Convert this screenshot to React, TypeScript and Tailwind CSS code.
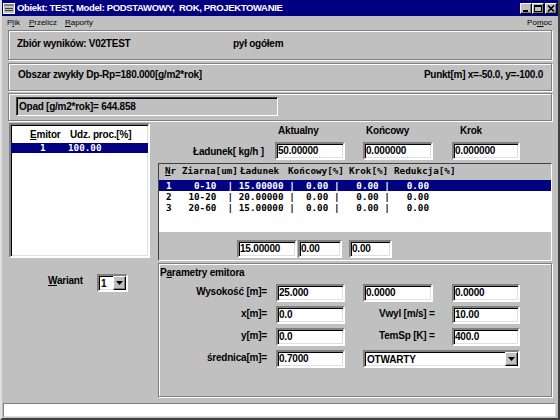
import React from "react";

const sunken =
  "border-2 border-t-[#808080] border-l-[#808080] border-b-white border-r-white shadow-[inset_1px_1px_0_#000,inset_-1px_-1px_0_#dfdfdf]";
const raised =
  "border border-t-white border-l-white border-b-black border-r-black shadow-[inset_-1px_-1px_0_#808080]";
const etched = "border border-[#808080] shadow-[inset_1px_1px_0_#fff,1px_1px_0_#fff]";
const sans = "font-['Liberation_Sans',Arial,sans-serif]";
const mono = "font-['DejaVu_Sans_Mono',monospace]";

function Field({ w, value, className = "" }: { w: string; value: string; className?: string }) {
  return (
    <div className={`${sunken} ${w} h-[18px] bg-white flex items-center pl-[1px] text-[10px] font-bold tracking-[-0.2px] leading-none ${className}`}>
      {value}
    </div>
  );
}

function DownBtn() {
  return (
    <div className={`${raised} w-[13px] h-[14px] bg-[#c0c0c0] flex items-center justify-center`}>
      <svg width="7" height="4" viewBox="0 0 7 4">
        <path d="M0 0H7L3.5 4Z" fill="#000" />
      </svg>
    </div>
  );
}

function TitleBtn({ kind }: { kind: "min" | "max" | "close" }) {
  return (
    <div className={`${raised} w-[12px] h-[11px] bg-[#c0c0c0] flex items-center justify-center`}>
      {kind === "min" && (
        <svg width="8" height="7" viewBox="0 0 8 7">
          <rect x="1" y="5" width="5" height="2" fill="#000" />
        </svg>
      )}
      {kind === "max" && (
        <svg width="8" height="7" viewBox="0 0 8 7">
          <rect x="0.5" y="0.5" width="7" height="6" fill="none" stroke="#000" />
          <rect x="0" y="0" width="8" height="2" fill="#000" />
        </svg>
      )}
      {kind === "close" && (
        <svg width="8" height="7" viewBox="0 0 8 7">
          <path d="M1 0.5L7 6.5M7 0.5L1 6.5" stroke="#000" strokeWidth="1.6" />
        </svg>
      )}
    </div>
  );
}

const rows = [
  "1    0-10  | 15.00000 |  0.00 |   0.00 |   0.00",
  "2   10-20  | 20.00000 |  0.00 |   0.00 |   0.00",
  "3   20-60  | 15.00000 |  0.00 |   0.00 |   0.00",
];

export default function App() {
  return (
    <div className={`w-[560px] h-[420px] bg-[#c0c0c0] flex flex-col overflow-hidden text-black ${sans} border-l-2 border-r-2 border-b-2 border-l-[#dfdfdf] border-r-[#404040] border-b-[#404040]`}>
      {/* Title bar */}
      <div className="h-[16px] bg-[#000080] flex items-center pl-[1px] pr-[1px] shrink-0">
        <svg width="12" height="11" viewBox="0 0 12 11" className="shrink-0">
          <rect x="0.5" y="0.5" width="11" height="10" fill="#c0c0c0" stroke="#fff" />
          <rect x="1" y="1" width="10" height="2" fill="#808080" />
          <rect x="2" y="5" width="8" height="1" fill="#404040" />
          <rect x="2" y="7" width="8" height="1" fill="#404040" />
        </svg>
        <span className="ml-[2px] text-white font-bold text-[9.5px] tracking-[-0.35px] whitespace-pre leading-none">
          Obiekt: TEST, Model: PODSTAWOWY,  ROK, PROJEKTOWANIE
        </span>
        <div className="ml-auto flex items-center">
          <TitleBtn kind="min" />
          <TitleBtn kind="max" />
          <div className="w-[1px]" />
          <TitleBtn kind="close" />
        </div>
      </div>

      {/* Menu */}
      <div className="h-[14px] flex items-center text-[8px] leading-none shrink-0 pl-[5px] pr-[6px]">
        <span>P<span className="underline">l</span>ik</span>
        <span className="ml-[9px]"><span className="underline">P</span>rzelicz</span>
        <span className="ml-[8px]"><span className="underline">R</span>aporty</span>
        <span className="ml-auto">Po<span className="underline">m</span>oc</span>
      </div>

      {/* Info panels */}
      <div className="px-[6px] flex flex-col text-[10px] font-bold tracking-[-0.25px] leading-[12px]">
        <div className={`${etched} h-[30px] flex items-start pt-[7px] pl-[8px]`}>
          <span className="w-[216px]">Zbiór wyników: V02TEST</span>
          <span>pył ogółem</span>
        </div>
        <div className={`${etched} h-[28px] mt-[3px] flex items-start pt-[5px] pl-[9px] pr-[8px]`}>
          <span>Obszar zwykły Dp-Rp=180.000[g/m2*rok]</span>
          <span className="ml-auto">Punkt[m] x=-50.0, y=-100.0</span>
        </div>
        <div className={`${etched} h-[28px] mt-[2px] pt-[3px] pl-[7px]`}>
          <div className="w-[262px] h-[19px] border border-t-[#404040] border-l-[#404040] border-b-white border-r-white shadow-[inset_1px_1px_0_#000] flex items-center pl-[2px]">
            Opad [g/m2*rok]= 644.858
          </div>
        </div>
      </div>

      {/* Main area */}
      <div className="mt-[2px] flex pl-[7px]">
        {/* Left column */}
        <div className="w-[141px] flex flex-col">
          <div className={`${sunken} h-[135px] bg-white flex flex-col`}>
            <div className="h-[18px] flex items-center text-[10px] font-bold tracking-[-0.2px] pt-[1px]">
              <span className="ml-[19px] w-[40px]"><span className="underline">E</span>mitor</span>
              <span>Udz. proc.[%]</span>
            </div>
            <div className={`h-[10px] bg-[#000080] text-white ${mono} font-bold text-[9.3px] leading-[10px] whitespace-pre pl-[29px]`}>
              {"1    100.00"}
            </div>
          </div>
          <div className="mt-[16px] flex items-center pl-[39px]">
            <span className="w-[49px] text-[10px] font-bold tracking-[-0.2px] -mt-[6px]"><span className="underline">W</span>ariant</span>
            <div className={`${sunken} w-[31px] h-[18px] bg-white flex items-center pl-[2px]`}>
              <span className="text-[10px] font-bold flex-1">1</span>
              <DownBtn />
            </div>
          </div>
        </div>

        {/* Right column */}
        <div className="ml-[8px] w-[394px] flex flex-col">
          <div className="h-[14px] flex items-center text-[10px] font-bold tracking-[-0.2px]">
            <span className="ml-[120px] w-[88px]">Aktualny</span>
            <span className="w-[94px]">Końcowy</span>
            <span>Krok</span>
          </div>
          <div className="mt-[5px] h-[18px] flex items-center text-[10px] font-bold tracking-[-0.2px]">
            <div className="w-[117px] pl-[35px]">Ładunek[ kg/h ]</div>
            <Field w="w-[70px]" value="50.00000" />
            <Field w="w-[70px]" value="0.000000" className="ml-[18px]" />
            <Field w="w-[68px]" value="0.000000" className="ml-[19px]" />
          </div>

          {/* Table group */}
          <div className="mt-[3px] h-[98px] border border-t-[#404040] border-l-[#404040] border-b-white border-r-white flex flex-col">
            <div className={`h-[16px] flex items-start pt-[1px] pl-[6px] ${mono} font-bold text-[9.3px] leading-[12px] whitespace-pre`}>
              <span className="w-[17px]"><span className="underline">N</span>r</span>
              <span className="w-[58px]">Ziarna[um]</span>
              <span className="w-[48px]">Ładunek</span>
              <span className="w-[61px]">Końcowy[%]</span>
              <span className="w-[45px]">Krok[%]</span>
              <span>Redukcja[%]</span>
            </div>
            <div className={`h-[52px] bg-white ${mono} font-bold text-[9.3px] leading-[11px] whitespace-pre`}>
              {rows.map((r, i) => (
                <div key={i} className={`h-[11px] pl-[7px] ${i === 0 ? "bg-[#000080] text-white" : ""}`}>
                  {r}
                </div>
              ))}
            </div>
            <div className="mt-[8px] flex pl-[78px]">
              <Field w="w-[60px]" value="15.00000" />
              <Field w="w-[44px]" value="0.00" className="ml-[1px]" />
              <Field w="w-[43px]" value="0.00" className="ml-[7px]" />
            </div>
          </div>

          {/* Parametry emitora */}
          <div className={`${etched} mt-[2px] h-[134px] flex flex-col text-[10px] font-bold tracking-[-0.2px]`}>
            <div className="pl-[1px] pt-[3px] leading-[12px]">
              P<span className="underline">a</span>rametry emitora
            </div>
            <div className="mt-[5px] flex flex-col gap-[4px]">
              <div className="flex items-center h-[18px]">
                <span className="w-[108px] text-right -mt-[4px]">Wysokość [m]=</span>
                <Field w="w-[69px]" value="25.000" className="ml-[9px]" />
                <Field w="w-[70px]" value="0.0000" className="ml-[18px]" />
                <Field w="w-[68px]" value="0.0000" className="ml-[19px]" />
              </div>
              <div className="flex items-center h-[18px]">
                <span className="w-[108px] text-right -mt-[4px]">x[m]=</span>
                <Field w="w-[69px]" value="0.0" className="ml-[9px]" />
                <span className="ml-[18px] w-[70px] pl-[16px] -mt-[4px] whitespace-pre">Vwyl [m/s] =</span>
                <Field w="w-[68px]" value="10.00" className="ml-[19px]" />
              </div>
              <div className="flex items-center h-[18px]">
                <span className="w-[108px] text-right -mt-[4px]">y[m]=</span>
                <Field w="w-[69px]" value="0.0" className="ml-[9px]" />
                <span className="ml-[18px] w-[70px] pl-[16px] -mt-[4px] whitespace-pre">TemSp [K] =</span>
                <Field w="w-[68px]" value="400.0" className="ml-[19px]" />
              </div>
              <div className="flex items-center h-[18px]">
                <span className="w-[108px] text-right -mt-[4px]">średnica[m]=</span>
                <Field w="w-[69px]" value="0.7000" className="ml-[9px]" />
                <div className={`${sunken} ml-[18px] w-[157px] h-[18px] bg-white flex items-center pl-[2px]`}>
                  <span className="flex-1 pt-[1px]">OTWARTY</span>
                  <DownBtn />
                </div>
              </div>
            </div>
          </div>
        </div>
      </div>

      {/* Status bar */}
      <div className="mt-auto mb-[1px] ml-[1px] mr-[2px] h-[14px] bg-white border border-t-[#808080] border-l-[#808080] border-b-[#dfdfdf] border-r-[#dfdfdf]" />
    </div>
  );
}
